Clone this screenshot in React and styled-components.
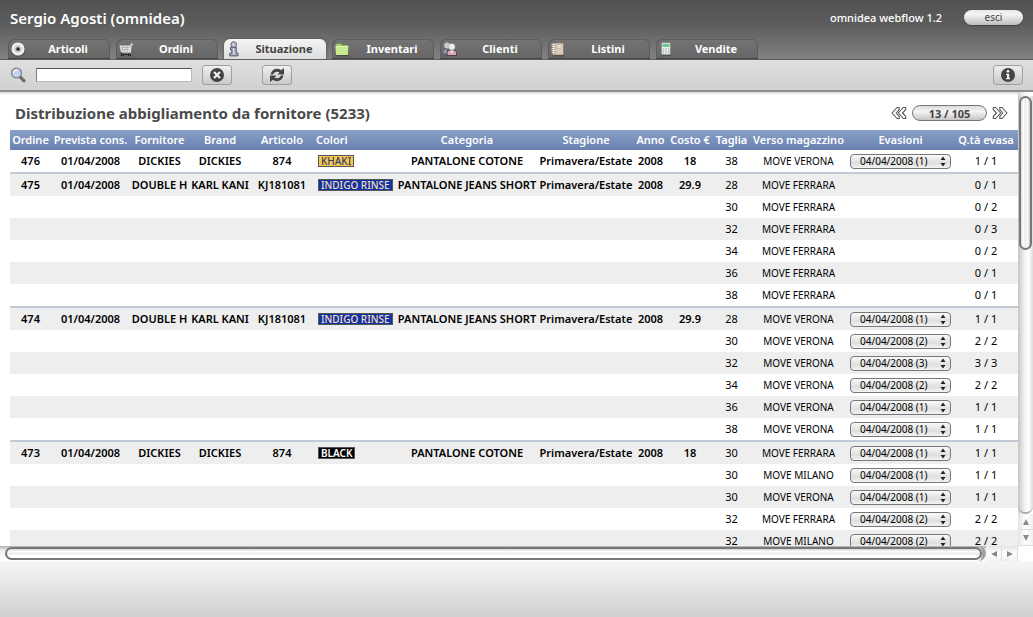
import React from "react";
import styled, { createGlobalStyle, css } from "styled-components";

const GlobalStyle = createGlobalStyle`
  * { box-sizing: border-box; }
  html, body, #root { height: 100%; }
  body {
    margin: 0;
    overflow: hidden;
    background: #fff;
    color: #000;
    font-family: "Noto Sans", "Open Sans", sans-serif;
    font-size: 11px;
  }
  button, input, select { font-family: inherit; margin: 0; }
`;

const Page = styled.div`
  display: flex;
  flex-direction: column;
  height: 100vh;
`;

/* ---------- header ---------- */

const Header = styled.header`
  display: flex;
  flex-direction: column;
  height: 60px;
  flex: none;
  background: linear-gradient(#525252, #5c5c5c 40%, #828282);
  border-bottom: 1px solid #5f5f5f;
`;

const HeaderTop = styled.div`
  display: flex;
  align-items: center;
  justify-content: space-between;
  height: 40px;
  padding: 0 10px 4px;
  color: #fff;
`;

const UserName = styled.div`
  font-size: 15px;
  line-height: 20px;
  font-weight: 600;
`;

const Session = styled.div`
  display: flex;
  align-items: center;
  gap: 22px;
  font-weight: 500;
  line-height: 16px;
`;

const LogoutButton = styled.button`
  width: 59px;
  height: 15px;
  padding: 0;
  border: 0;
  border-radius: 8px;
  background: linear-gradient(#e8e8e8, #f4f4f4 30%, #bdbdbd);
  box-shadow: 0 1px 1px #444;
  color: #444;
  font-size: 10px;
  line-height: 13px;
`;

const TabBar = styled.nav`
  display: flex;
  gap: 6px;
  height: 20px;
  padding-left: 8px;
`;

const Tab = styled.a`
  display: flex;
  align-items: center;
  width: 102px;
  height: 20px;
  padding-left: 2px;
  border-radius: 6px 6px 0 0;
  color: #fff;
  font-size: 11px;
  line-height: 16px;
  font-weight: 700;
  text-decoration: none;
  background: linear-gradient(#747474, #666);
  box-shadow: inset 1px 1px 0 #5c5c5c, inset -1px 0 0 #5c5c5c;
  border-bottom: 1px solid #444;

  ${(p) =>
    p.$active &&
    css`
      color: #444;
      background: linear-gradient(#f4f4f4, #dedede);
      box-shadow: 0 0 3px #4a4a4a;
      border-bottom: 0;
      clip-path: inset(-4px -4px 0 -4px);
    `}
`;

const TabLabel = styled.span`
  flex: 1;
  text-align: center;
`;

/* ---------- toolbar ---------- */

const Toolbar = styled.div`
  display: flex;
  align-items: center;
  height: 32px;
  flex: none;
  padding: 0 10px;
  background: linear-gradient(#dfdfdf, #d1d1d1);
  border-bottom: 2px solid #8d8d8d;
`;

const SearchLabel = styled.label`
  display: flex;
  align-items: center;
  gap: 10px;
`;

const SearchInput = styled.input`
  width: 156px;
  height: 14px;
  padding: 0 2px;
  border: 1px solid #b8b8b8;
  border-top-color: #555;
  border-left-color: #808080;
  border-radius: 0;
  background: #fff;
  font-size: 11px;
  outline: 0;
`;

const ToolButton = styled.button`
  display: flex;
  align-items: center;
  justify-content: center;
  width: 30px;
  height: 20px;
  padding: 0;
  border: 1px solid #a0a0a0;
  border-radius: 3px;
  background: linear-gradient(#efefef, #c9c9c9);
`;

const ToolGroup = styled.div`
  display: flex;
  flex: 1;
  gap: 30px;
  padding-left: 10px;
`;

/* ---------- content ---------- */

const Viewport = styled.main`
  flex: 1;
  min-height: 0;
  display: grid;
  grid-template-columns: minmax(0, 1fr) 15px;
  grid-template-rows: minmax(0, 1fr) 15px;
`;

const Content = styled.section`
  overflow: hidden;
  padding-left: 10px;
  background: linear-gradient(#d8d8d8, #fff 3px);
`;

const TitleRow = styled.div`
  display: flex;
  align-items: center;
  justify-content: space-between;
  height: 38px;
  padding: 4px 10px 0 5px;
`;

const Title = styled.h1`
  margin: 0;
  font-size: 15px;
  line-height: 20px;
  font-weight: 700;
  color: #4a4a4a;
`;

const Pager = styled.div`
  display: flex;
  align-items: center;
  gap: 5px;
`;

const PagerArrow = styled.button`
  display: flex;
  padding: 0;
  border: 0;
  background: none;
`;

const PagerPill = styled.button`
  width: 75px;
  height: 16px;
  padding: 0;
  border: 1px solid #777;
  border-radius: 8px;
  background: linear-gradient(#dcdcdc, #f4f4f4 40%, #c4c4c4);
  color: #444;
  font-size: 11px;
  line-height: 13px;
  font-weight: 700;
`;

const Table = styled.table`
  width: 100%;
  table-layout: fixed;
  border-collapse: separate;
  border-spacing: 0;
`;

const HeadCell = styled.th`
  height: 20px;
  padding: 0 ${(p) => (p.$left ? 3 : 0)}px;
  text-align: ${(p) => (p.$left ? "left" : "center")};
  color: #fff;
  font-weight: 600;
  font-size: 11px;
  line-height: 16px;
  white-space: nowrap;
`;

const HeadRow = styled.tr`
  background: linear-gradient(#8ba0c6, #6781b0);
`;

const Group = styled.tbody`
  & + & > tr:first-child > td {
    height: 24px;
    border-top: 2px solid #c2cad6;
  }
`;

const Row = styled.tr`
  background: ${(p) => (p.$shaded ? "#eeeeee" : "#ffffff")};
`;

const Cell = styled.td`
  height: 22px;
  padding: 0 ${(p) => (p.$left ? 5 : 0)}px;
  text-align: ${(p) => (p.$left ? "left" : "center")};
  vertical-align: middle;
  font-size: ${(p) => (p.$small ? 10 : 11)}px;
  line-height: 14px;
  font-weight: ${(p) => (p.$strong ? 600 : 400)};
  white-space: nowrap;
`;

const Chip = styled.span`
  display: block;
  width: max-content;
  height: 12px;
  padding: 0 2px;
  border: 1px solid #555;
  background: ${(p) => p.$bg};
  color: ${(p) => p.$fg};
  font-size: 10px;
  line-height: 10px;
  font-weight: ${(p) => (p.$strong ? 600 : 500)};
`;

const SelectBox = styled.span`
  display: grid;
  grid-template-columns: minmax(0, 1fr);
  width: 101px;
  height: 15px;
  margin: 0 auto;
  align-items: center;

  & > * { grid-area: 1 / 1; }
  & > svg { justify-self: end; margin-right: 5px; pointer-events: none; }
`;

const Select = styled.select`
  appearance: none;
  width: 100%;
  height: 15px;
  padding: 0 20px 0 9px;
  border: 1px solid #777;
  border-radius: 4px;
  background: linear-gradient(#fafafa, #dedede 60%, #f4f4f4);
  color: #000;
  font-size: 10px;
  line-height: 13px;
`;

/* ---------- scroll bars ---------- */

const VBar = styled.div`
  display: flex;
  flex-direction: column;
  padding-top: 4px;
  background: linear-gradient(90deg, #d2d2d2, #f4f4f4 40%, #fff);
`;

const VTrack = styled.div`
  flex: 1;
  display: flex;
  flex-direction: column;
  border-bottom: 2px solid #a8a8a8;
  border-radius: 0 0 8px 8px;
  padding: 0 1px;
  background: linear-gradient(90deg, #c4c4c4, #efefef 40%, #fff 70%, #dcdcdc);
`;

const VThumb = styled.div`
  height: 37%;
  border: 2px solid #777;
  border-radius: 7px;
  background: linear-gradient(90deg, #dedede, #fff 30%, #e9e9e9 50%, #fff 70%, #ccc);
`;

const HBar = styled.div`
  display: flex;
  padding-left: 5px;
  background: linear-gradient(#b0b0b0, #f0f0f0 30%, #fff);
`;

const HTrack = styled.div`
  flex: 1;
  display: flex;
  padding: 1px 0;
  border-right: 4px solid #a2a2a2;
  border-radius: 0 8px 8px 0;
`;

const HThumb = styled.div`
  flex: 1;
  border: 2px solid #777;
  border-radius: 7px;
  background: linear-gradient(#d4d4d4, #fff 30%, #e6e6e6 55%, #fff 65%, #fff);
`;

const ScrollButton = styled.button`
  display: flex;
  align-items: center;
  justify-content: center;
  width: ${(p) => (p.$vertical ? 15 : 16)}px;
  height: ${(p) => (p.$vertical ? 16 : 15)}px;
  padding: 0;
  border: 0 solid #ddd;
  border-width: ${(p) => (p.$vertical ? "0 0 1px" : "0 1px 0 0")};
  background: ${(p) =>
    p.$vertical
      ? "linear-gradient(90deg, #e4e4e4, #fff 50%, #f0f0f0)"
      : "linear-gradient(#e4e4e4, #fff 50%, #f0f0f0)"};
`;

const Footer = styled.footer`
  height: 56px;
  flex: none;
  background: linear-gradient(#f6f6f6, #d0d0d0);
`;

/* ---------- icons ---------- */

const Icon = ({ children, size = 16 }) => (
  <svg width={size} height={size} viewBox="0 0 16 16" aria-hidden="true">
    {children}
  </svg>
);

const DiscIcon = () => (
  <Icon>
    <ellipse cx="8" cy="9" rx="7.300" ry="6.800" fill="#333" opacity=".55" />
    <circle cx="8" cy="8" r="6.600" fill="#f1f1f1" />
    <circle cx="8" cy="8" r="4.400" fill="#ddd" />
    <circle cx="8" cy="8" r="2.600" fill="#999" />
    <circle cx="8" cy="8" r="1.500" fill="#222" />
  </Icon>
);

const CartIcon = () => (
  <Icon>
    <path d="M1.500 4.500h11l-1 6.500H3z" fill="#e6e6e6" />
    <path d="M2.500 6.500h9M3 8.500h8.500M4.800 5v6M7.200 5v6M9.600 5v6" stroke="#a5a5a5" strokeWidth=".7" />
    <path d="M14.800 3.200h-1.500L12 12H4" fill="none" stroke="#eee" strokeWidth="1.200" />
    <path d="M3 13.300h9.500" stroke="#222" strokeWidth="1.400" />
    <circle cx="4.300" cy="13.800" r="1.500" fill="#111" />
    <circle cx="11.500" cy="13.800" r="1.500" fill="#111" />
    <circle cx="4.300" cy="13.800" r=".5" fill="#ddd" />
    <circle cx="11.500" cy="13.800" r=".5" fill="#ddd" />
  </Icon>
);

const InfoFigureIcon = () => (
  <Icon>
    <path d="M4.500 6.200h5.700v6H12v2.700H3.800v-2.700h2V8.800H4.500z" fill="#a9adc6" stroke="#54566c" strokeWidth="1" />
    <circle cx="7.800" cy="3.600" r="2.800" fill="#c4c8de" stroke="#54566c" strokeWidth="1" />
    <path d="M7.700 7.500v6" stroke="#dfe1f0" strokeWidth="1.200" />
  </Icon>
);

const FolderIcon = () => (
  <Icon>
    <path d="M1.500 14.500h13" stroke="#333" strokeWidth="1.600" opacity=".6" />
    <path d="M2 2.500h5l1 1.500h6V13H2z" fill="#a5cf68" stroke="#6b9137" strokeWidth=".6" />
    <path d="M1.500 5.500h12.800l-.5 8.500H2z" fill="#c8ea90" />
    <path d="M1.500 5.500h12.800" stroke="#eeffcc" strokeWidth=".8" />
  </Icon>
);

const PeopleIcon = () => (
  <Icon>
    <path d="M1 13V9.500Q2 7.500 5 8l1.500 5z" fill="#8d99b5" stroke="#444" strokeWidth=".5" />
    <circle cx="5" cy="4.500" r="2.900" fill="#c9c9c9" />
    <path d="M5 14.500V11q1-2 5-2 4 0 4.500 2.200v3.300z" fill="#dcaab2" stroke="#3a2a2e" strokeWidth=".8" />
    <path d="M7.500 9.500l2.200 2.500 2.300-2.500z" fill="#f4e8ea" />
    <circle cx="9.800" cy="5.800" r="3.300" fill="#efefef" stroke="#888" strokeWidth=".4" />
  </Icon>
);

const NotebookIcon = () => (
  <Icon>
    <path d="M3 14.700h11" stroke="#333" strokeWidth="1.400" opacity=".6" />
    <rect x="2.500" y="2" width="11" height="12" rx="1" fill="#d9cbb8" stroke="#7d6d59" strokeWidth=".6" />
    <rect x="7" y="4" width="4.500" height="3" fill="#f1eade" stroke="#b09d84" strokeWidth=".5" />
    <path d="M5 2.500v11" stroke="#a08f78" strokeWidth=".6" />
    <path d="M1.500 3.500h3M1.500 5.500h3M1.500 7.500h3M1.500 9.500h3M1.500 11.500h3" stroke="#eee" strokeWidth=".9" />
  </Icon>
);

const CalculatorIcon = () => (
  <Icon>
    <rect x="3.500" y="2.500" width="9.500" height="12.500" rx="1.500" fill="#333" opacity=".6" />
    <rect x="3.500" y="1.800" width="9" height="12" rx="1" fill="#eef1ef" stroke="#777" strokeWidth=".5" />
    <rect x="4.500" y="3" width="7" height="3" fill="#66c98b" />
    <path d="M4.800 8h6.600M4.800 10h6.600M4.800 12h6.600" stroke="#8aa295" strokeWidth="1.200" strokeDasharray="1.400 1.200" />
  </Icon>
);

const SearchIcon = () => (
  <Icon>
    <path d="M10 9.800l4 4" stroke="#555" strokeWidth="3" strokeLinecap="round" />
    <path d="M11 10.500l3 3" stroke="#999" strokeWidth="1" strokeLinecap="round" />
    <circle cx="6.500" cy="6" r="4.900" fill="#c3d4f2" stroke="#808088" strokeWidth="1.300" />
    <path d="M3.700 6q0-3 3.500-3" stroke="#fff" strokeWidth="1.200" fill="none" />
  </Icon>
);

const ClearIcon = () => (
  <Icon>
    <circle cx="8" cy="8" r="7" fill="#444" />
    <path d="M5 5l6 6M11 5l-6 6" stroke="#f0f0f0" strokeWidth="2.200" />
  </Icon>
);

const RefreshIcon = () => (
  <Icon>
    <path d="M1.500 7.500Q3 1.800 8 1.800q2.500 0 4 1.400L15 1v6.500H8.500l2-2Q9.300 4.600 8 4.700 5 4.800 4 7.500z" fill="#444" />
    <path d="M14.500 8.500Q13 14.200 8 14.200q-2.500 0-4-1.400L1 15V8.500h6.500l-2 2q1.200.9 2.500.8 3-.1 4-2.800z" fill="#444" />
  </Icon>
);

const InfoIcon = () => (
  <Icon>
    <circle cx="8" cy="8" r="7" fill="#444" />
    <circle cx="8" cy="4.300" r="1.400" fill="#eee" />
    <path d="M6 6.700h3.200v4.300h1v1.200H6V11h1V8H6z" fill="#eee" />
  </Icon>
);

const DoubleChevron = ({ right }) => (
  <svg width="16" height="16" viewBox="0 0 16 16" aria-hidden="true">
    <g
      transform={right ? "translate(16 0) scale(-1 1)" : undefined}
      fill="#fff"
      stroke="#555"
      strokeWidth="1.100"
      strokeLinejoin="round"
    >
      <path d="M1 8l5-5.500h2.200v2.200L5.200 8l3 3.300v2.200H6z" />
      <path d="M7.300 8l5-5.500h2.400v2.200L11.600 8l3.100 3.300v2.200h-2.400z" />
    </g>
  </svg>
);

const UpDown = () => (
  <svg width="6" height="11" viewBox="0 0 6 11" aria-hidden="true">
    <path d="M.5 4L3 .5 5.500 4zM.5 7L3 10.500 5.500 7z" fill="#222" />
  </svg>
);

const ARROWS = {
  up: "M4 1l3 6H1z",
  down: "M4 7L1 1h6z",
  left: "M1 4l6-3v6z",
  right: "M7 4L1 1v6z",
};

const Arrow = ({ to }) => (
  <svg width="8" height="8" viewBox="0 0 8 8" aria-hidden="true">
    <path d={ARROWS[to]} fill="#888" />
  </svg>
);

/* ---------- data ---------- */

const TABS = [
  { label: "Articoli", icon: DiscIcon },
  { label: "Ordini", icon: CartIcon },
  { label: "Situazione", icon: InfoFigureIcon, active: true },
  { label: "Inventari", icon: FolderIcon },
  { label: "Clienti", icon: PeopleIcon },
  { label: "Listini", icon: NotebookIcon },
  { label: "Vendite", icon: CalculatorIcon },
];

const COLUMNS = [
  ["Ordine", 41],
  ["Prevista cons.", 79],
  ["Fornitore", 59],
  ["Brand", 62],
  ["Articolo", 62],
  ["Colori", 83],
  ["Categoria", 142],
  ["Stagione", 96],
  ["Anno", 33],
  ["Costo €", 46],
  ["Taglia", 37],
  ["Verso magazzino", 97],
  ["Evasioni", 107],
  ["Q.tà evasa", 64],
];

const TOTAL = COLUMNS.reduce((sum, [, w]) => sum + w, 0);

const KHAKI = { name: "KHAKI", bg: "#f6c84e", fg: "#34406e" };
const INDIGO = { name: "INDIGO RINSE", bg: "#1233a6", fg: "#f3ddb4" };
const BLACK = { name: "BLACK", bg: "#000", fg: "#fff", strong: true };

const ORDERS = [
  {
    info: ["476", "01/04/2008", "DICKIES", "DICKIES", "874"],
    color: KHAKI,
    more: ["PANTALONE COTONE", "Primavera/Estate", "2008", "18"],
    lines: [["38", "MOVE VERONA", "04/04/2008 (1)", "1 / 1"]],
  },
  {
    info: ["475", "01/04/2008", "DOUBLE H", "KARL KANI", "KJ181081"],
    color: INDIGO,
    more: ["PANTALONE JEANS SHORT", "Primavera/Estate", "2008", "29.9"],
    lines: [
      ["28", "MOVE FERRARA", "", "0 / 1"],
      ["30", "MOVE FERRARA", "", "0 / 2"],
      ["32", "MOVE FERRARA", "", "0 / 3"],
      ["34", "MOVE FERRARA", "", "0 / 2"],
      ["36", "MOVE FERRARA", "", "0 / 1"],
      ["38", "MOVE FERRARA", "", "0 / 1"],
    ],
  },
  {
    info: ["474", "01/04/2008", "DOUBLE H", "KARL KANI", "KJ181081"],
    color: INDIGO,
    more: ["PANTALONE JEANS SHORT", "Primavera/Estate", "2008", "29.9"],
    lines: [
      ["28", "MOVE VERONA", "04/04/2008 (1)", "1 / 1"],
      ["30", "MOVE VERONA", "04/04/2008 (2)", "2 / 2"],
      ["32", "MOVE VERONA", "04/04/2008 (3)", "3 / 3"],
      ["34", "MOVE VERONA", "04/04/2008 (2)", "2 / 2"],
      ["36", "MOVE VERONA", "04/04/2008 (1)", "1 / 1"],
      ["38", "MOVE VERONA", "04/04/2008 (1)", "1 / 1"],
    ],
  },
  {
    info: ["473", "01/04/2008", "DICKIES", "DICKIES", "874"],
    color: BLACK,
    more: ["PANTALONE COTONE", "Primavera/Estate", "2008", "18"],
    lines: [
      ["30", "MOVE FERRARA", "04/04/2008 (1)", "1 / 1"],
      ["30", "MOVE MILANO", "04/04/2008 (1)", "1 / 1"],
      ["30", "MOVE VERONA", "04/04/2008 (1)", "1 / 1"],
      ["32", "MOVE FERRARA", "04/04/2008 (2)", "2 / 2"],
      ["32", "MOVE MILANO", "04/04/2008 (2)", "2 / 2"],
    ],
  },
];

function OrderGroup({ order, start }) {
  return (
    <Group>
      {order.lines.map(([size, store, shipped, qty], i) => {
        const first = i === 0;
        return (
          <Row key={i} $shaded={(start + i) % 2 === 1}>
            {order.info.map((text, c) => (
              <Cell key={c} $strong>{first && text}</Cell>
            ))}
            <Cell $left>
              {first && (
                <Chip $bg={order.color.bg} $fg={order.color.fg} $strong={order.color.strong}>
                  {order.color.name}
                </Chip>
              )}
            </Cell>
            {order.more.map((text, c) => (
              <Cell key={c} $strong>{first && text}</Cell>
            ))}
            <Cell>{size}</Cell>
            <Cell $small>{store}</Cell>
            <Cell>
              {shipped && (
                <SelectBox>
                  <Select aria-label={`Evasioni ${order.info[0]}, taglia ${size}`} defaultValue={shipped}>
                    <option>{shipped}</option>
                  </Select>
                  <UpDown />
                </SelectBox>
              )}
            </Cell>
            <Cell>{qty}</Cell>
          </Row>
        );
      })}
    </Group>
  );
}

export default function App() {
  let count = 0;
  return (
    <>
      <GlobalStyle />
      <Page>
        <Header>
          <HeaderTop>
            <UserName>Sergio Agosti (omnidea)</UserName>
            <Session>
              <span>omnidea webflow 1.2</span>
              <LogoutButton type="button">esci</LogoutButton>
            </Session>
          </HeaderTop>
          <TabBar>
            {TABS.map(({ label, icon: TabIcon, active }) => (
              <Tab key={label} href="#" $active={active}>
                <TabIcon />
                <TabLabel>{label}</TabLabel>
              </Tab>
            ))}
          </TabBar>
        </Header>

        <Toolbar>
          <SearchLabel>
            <SearchIcon />
            <SearchInput type="text" aria-label="Cerca" />
          </SearchLabel>
          <ToolGroup>
            <ToolButton type="button" aria-label="Annulla"><ClearIcon /></ToolButton>
            <ToolButton type="button" aria-label="Aggiorna"><RefreshIcon /></ToolButton>
          </ToolGroup>
          <ToolButton type="button" aria-label="Informazioni"><InfoIcon /></ToolButton>
        </Toolbar>

        <Viewport>
          <Content>
            <TitleRow>
              <Title>Distribuzione abbigliamento da fornitore (5233)</Title>
              <Pager>
                <PagerArrow type="button" aria-label="Precedente"><DoubleChevron /></PagerArrow>
                <PagerPill type="button">13 / 105</PagerPill>
                <PagerArrow type="button" aria-label="Successiva"><DoubleChevron right /></PagerArrow>
              </Pager>
            </TitleRow>
            <Table>
              <colgroup>
                {COLUMNS.map(([name, w]) => (
                  <col key={name} style={{ width: `${(w / TOTAL) * 100}%` }} />
                ))}
              </colgroup>
              <thead>
                <HeadRow>
                  {COLUMNS.map(([name]) => (
                    <HeadCell key={name} scope="col" $left={name === "Colori"}>{name}</HeadCell>
                  ))}
                </HeadRow>
              </thead>
              {ORDERS.map((order) => {
                const start = count;
                count += order.lines.length;
                return <OrderGroup key={order.info[0]} order={order} start={start} />;
              })}
            </Table>
          </Content>
          <VBar>
            <VTrack><VThumb /></VTrack>
            <ScrollButton type="button" $vertical aria-label="Su"><Arrow to="up" /></ScrollButton>
            <ScrollButton type="button" $vertical aria-label="Giù"><Arrow to="down" /></ScrollButton>
          </VBar>
          <HBar>
            <HTrack><HThumb /></HTrack>
            <ScrollButton type="button" aria-label="Sinistra"><Arrow to="left" /></ScrollButton>
            <ScrollButton type="button" aria-label="Destra"><Arrow to="right" /></ScrollButton>
          </HBar>
        </Viewport>
        <Footer />
      </Page>
    </>
  );
}
